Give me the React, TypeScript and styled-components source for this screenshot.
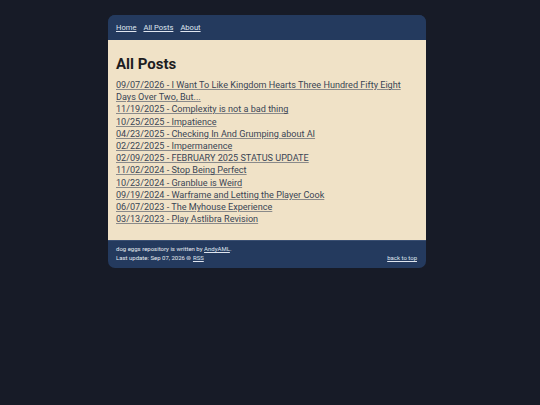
import React from "react";
import styled, { createGlobalStyle } from "styled-components";

const posts = [
  "09/07/2026 - I Want To Like Kingdom Hearts Three Hundred Fifty Eight Days Over Two, But...",
  "11/19/2025 - Complexity is not a bad thing",
  "10/25/2025 - Impatience",
  "04/23/2025 - Checking In And Grumping about AI",
  "02/22/2025 - Impermanence",
  "02/09/2025 - FEBRUARY 2025 STATUS UPDATE",
  "11/02/2024 - Stop Being Perfect",
  "10/23/2024 - Granblue is Weird",
  "09/19/2024 - Warframe and Letting the Player Cook",
  "06/07/2023 - The Myhouse Experience",
  "03/13/2023 - Play Astlibra Revision",
];

const App = () => {
  return (
    <>
      <GlobalStyle />
      <Card>
        <Nav>
          <NavLink href="#">Home</NavLink>
          <NavLink href="#">All Posts</NavLink>
          <NavLink href="#">About</NavLink>
        </Nav>
        <Main>
          <Title>All Posts</Title>
          <PostList>
            {posts.map((p) => (
              <li key={p}>
                <PostLink href="#">{p}</PostLink>
              </li>
            ))}
          </PostList>
        </Main>
        <Footer>
          <FooterInfo>
            <span>
              dog eggs repository is written by <FootLink href="#">AndyAML</FootLink>.
            </span>
            <span>
              Last update: Sep 07, 2026 <Dot>⊚</Dot> <FootLink href="#">RSS</FootLink>
            </span>
          </FooterInfo>
          <FootLink href="#">back to top</FootLink>
        </Footer>
      </Card>
    </>
  );
};

export default App;

const GlobalStyle = createGlobalStyle`
  html, body {
    margin: 0;
    padding: 0;
    background: #171b27;
    font-family: Roboto, "Liberation Sans", sans-serif;
  }
`;

const Card = styled.div`
  width: 318px;
  margin: 15px 0 0 calc(50% - 162px);
  border-radius: 7px;
  overflow: hidden;
  background: #243a5e;
`;

const Nav = styled.nav`
  display: flex;
  align-items: center;
  gap: 7px;
  height: 25px;
  padding: 0 8px;
  background: #243a5e;
`;

const NavLink = styled.a`
  color: #dfe5ef;
  font-size: 7.6px;
  text-decoration: underline;
`;

const Main = styled.main`
  background: #f0e2c7;
  padding: 15px 8px 15px;
`;

const Title = styled.h1`
  margin: 0 0 5px;
  font-size: 15px;
  font-weight: 700;
  line-height: 19px;
  color: #1d1d1f;
`;

const PostList = styled.ul`
  list-style: none;
  margin: 0;
  padding: 0;
  font-size: 9.1px;
  line-height: 12.2px;
`;

const PostLink = styled.a`
  color: #3a4555;
  text-decoration: underline;
  text-decoration-color: #8a8a8a;
`;

const Footer = styled.footer`
  display: flex;
  justify-content: space-between;
  align-items: flex-end;
  padding: 4px 9px 6px 8px;
  border-top: 1px solid #3a4f72;
  color: #e6eaf0;
  font-size: 6px;
  line-height: 8.5px;
`;

const FooterInfo = styled.div`
  display: flex;
  flex-direction: column;
`;

const FootLink = styled.a`
  color: #dfe5ef;
  text-decoration: underline;
`;

const Dot = styled.span`
  font-size: 6px;
`;
